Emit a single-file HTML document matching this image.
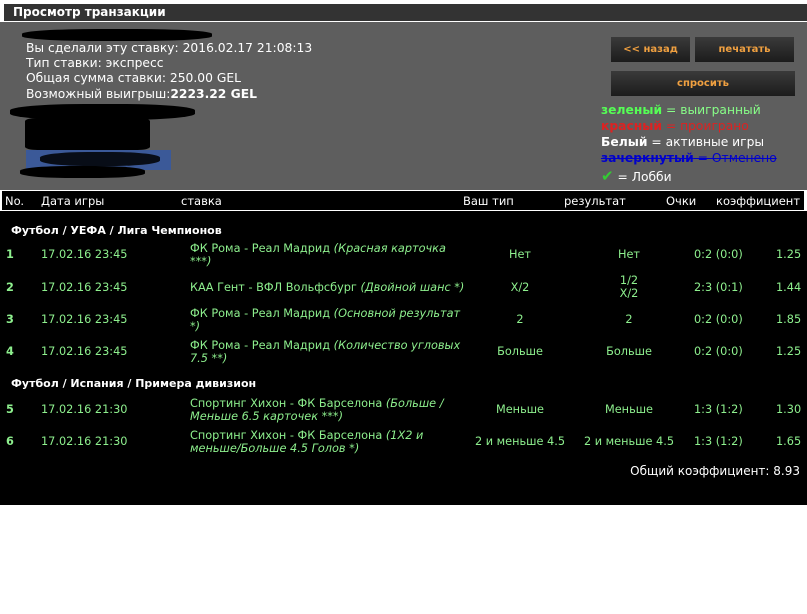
<!DOCTYPE html>
<html><head><meta charset="utf-8"><style>
body{margin:0;width:807px;height:614px;background:#fff;position:relative;overflow:hidden;font-family:"DejaVu Sans","Liberation Sans",sans-serif}
.a{position:absolute;white-space:nowrap}
#title{left:3px;top:3px;width:799px;height:17px;background:#333;border:1px solid #fff;color:#fff;font-weight:bold;font-size:12px;line-height:17px;padding-left:9px;box-sizing:content-box}
#panel{left:0;top:22px;width:807px;height:168px;background:#5e5e5e}
.pt{color:#fff;font-size:12.3px;left:26px}
.btn{background:linear-gradient(#3a3a3a,#1c1c1c);color:#f0a040;font-weight:bold;font-size:10px;text-align:center;line-height:25px;height:25px}
.lg{left:601px;font-size:12.3px}
#hdr{left:1px;top:190px;width:802px;height:19px;border:1px solid #fff;background:#000;color:#fff;font-size:11px}
#black{left:0;top:211px;width:807px;height:294px;background:#000}
.g{color:#8ef08e;font-size:11.3px}
.h{color:#fff;font-size:11.5px;top:194px}
.sec{color:#fff;font-weight:bold;font-size:11px;left:11px}
.c{text-align:center}
.blob{position:absolute;background:#000;border-radius:40%}
</style></head><body>
<div class="a" id="title">Просмотр транзакции</div>
<div class="a" id="panel"></div>
<div class="blob" style="left:22px;top:29px;width:190px;height:12px"></div>
<div class="a pt" style="top:41px">Вы сделали эту ставку: 2016.02.17 21:08:13</div>
<div class="a pt" style="top:56px">Тип ставки: экспресс</div>
<div class="a pt" style="top:71px">Общая сумма ставки: 250.00 GEL</div>
<div class="a pt" style="top:87px">Возможный выигрыш:<b>2223.22 GEL</b></div>
<div class="blob" style="left:10px;top:104px;width:185px;height:16px"></div>
<div class="blob" style="left:25px;top:118px;width:125px;height:32px;border-radius:10%"></div>
<div class="a" style="left:26px;top:150px;width:145px;height:20px;background:#3b5998"></div>
<div class="blob" style="left:40px;top:152px;width:120px;height:14px;opacity:.85"></div>
<div class="blob" style="left:20px;top:166px;width:125px;height:12px"></div>
<div class="a btn" style="left:611px;top:37px;width:79px">&lt;&lt; назад</div>
<div class="a btn" style="left:695px;top:37px;width:99px">печатать</div>
<div class="a btn" style="left:611px;top:71px;width:184px">спросить</div>
<div class="a lg" style="top:103px;color:#fff"><b style="color:#5f5">зеленый</b> <span style="color:#8f8">= выигранный</span></div>
<div class="a lg" style="top:119px;color:#d22"><b>красный</b> = проиграно</div>
<div class="a lg" style="top:135px;color:#fff"><b>Белый</b> = активные игры</div>
<div class="a lg" style="top:151px;color:#00c;text-decoration:line-through"><b>зачеркнутый</b> = Отменено</div>
<div class="a lg" style="top:167px;color:#fff"><span style="color:#3c3;font-size:15px;font-weight:bold">✔</span> = Лобби</div>
<div class="a" id="hdr"></div>
<div class="a h" style="left:5px">No.</div>
<div class="a h" style="left:41px">Дата игры</div>
<div class="a h" style="left:181px">ставка</div>
<div class="a h" style="left:463px">Ваш тип</div>
<div class="a h" style="left:564px">результат</div>
<div class="a h" style="left:666px">Очки</div>
<div class="a h" style="left:716px">коэффициент</div>
<div class="a" id="black"></div>

<div class="a sec" style="top:224px">Футбол / УЕФА / Лига Чемпионов</div>
<div class="a sec" style="top:377px">Футбол / Испания / Примера дивизион</div>

<div class="a g" style="left:6px;top:248px;font-weight:bold">1</div>
<div class="a g" style="left:41px;top:248px">17.02.16 23:45</div>
<div class="a g" style="left:190px;top:242px;line-height:13px;white-space:normal;width:262px">ФК Рома - Реал Мадрид <i>(Красная карточка ***)</i></div>
<div class="a g c" style="left:480px;top:248px;width:80px">Нет</div>
<div class="a g c" style="left:589px;top:248px;width:80px">Нет</div>
<div class="a g" style="left:694px;top:248px">0:2 (0:0)</div>
<div class="a g" style="left:776px;top:248px">1.25</div>

<div class="a g" style="left:6px;top:281px;font-weight:bold">2</div>
<div class="a g" style="left:41px;top:281px">17.02.16 23:45</div>
<div class="a g" style="left:190px;top:281px">КАА Гент - ВФЛ Вольфсбург <i>(Двойной шанс *)</i></div>
<div class="a g c" style="left:480px;top:281px;width:80px">X/2</div>
<div class="a g c" style="left:589px;top:274px;width:80px;line-height:13px">1/2<br>X/2</div>
<div class="a g" style="left:694px;top:281px">2:3 (0:1)</div>
<div class="a g" style="left:776px;top:281px">1.44</div>

<div class="a g" style="left:6px;top:313px;font-weight:bold">3</div>
<div class="a g" style="left:41px;top:313px">17.02.16 23:45</div>
<div class="a g" style="left:190px;top:307px;line-height:13px;white-space:normal;width:275px">ФК Рома - Реал Мадрид <i>(Основной результат *)</i></div>
<div class="a g c" style="left:480px;top:313px;width:80px">2</div>
<div class="a g c" style="left:589px;top:313px;width:80px">2</div>
<div class="a g" style="left:694px;top:313px">0:2 (0:0)</div>
<div class="a g" style="left:776px;top:313px">1.85</div>

<div class="a g" style="left:6px;top:345px;font-weight:bold">4</div>
<div class="a g" style="left:41px;top:345px">17.02.16 23:45</div>
<div class="a g" style="left:190px;top:339px;line-height:13px;white-space:normal;width:275px">ФК Рома - Реал Мадрид <i>(Количество угловых 7.5 **)</i></div>
<div class="a g c" style="left:480px;top:345px;width:80px">Больше</div>
<div class="a g c" style="left:589px;top:345px;width:80px">Больше</div>
<div class="a g" style="left:694px;top:345px">0:2 (0:0)</div>
<div class="a g" style="left:776px;top:345px">1.25</div>

<div class="a g" style="left:6px;top:403px;font-weight:bold">5</div>
<div class="a g" style="left:41px;top:403px">17.02.16 21:30</div>
<div class="a g" style="left:190px;top:397px;line-height:13px;white-space:normal;width:270px">Спортинг Хихон - ФК Барселона <i>(Больше / Меньше 6.5 карточек ***)</i></div>
<div class="a g c" style="left:480px;top:403px;width:80px">Меньше</div>
<div class="a g c" style="left:589px;top:403px;width:80px">Меньше</div>
<div class="a g" style="left:694px;top:403px">1:3 (1:2)</div>
<div class="a g" style="left:776px;top:403px">1.30</div>

<div class="a g" style="left:6px;top:435px;font-weight:bold">6</div>
<div class="a g" style="left:41px;top:435px">17.02.16 21:30</div>
<div class="a g" style="left:190px;top:429px;line-height:13px;white-space:normal;width:270px">Спортинг Хихон - ФК Барселона <i>(1X2 и меньше/Больше 4.5 Голов *)</i></div>
<div class="a g c" style="left:470px;top:435px;width:100px">2 и меньше 4.5</div>
<div class="a g c" style="left:579px;top:435px;width:100px">2 и меньше 4.5</div>
<div class="a g" style="left:694px;top:435px">1:3 (1:2)</div>
<div class="a g" style="left:776px;top:435px">1.65</div>

<div class="a" style="right:7px;top:464px;color:#fff;font-size:12px">Общий коэффициент: 8.93</div>
</body></html>
